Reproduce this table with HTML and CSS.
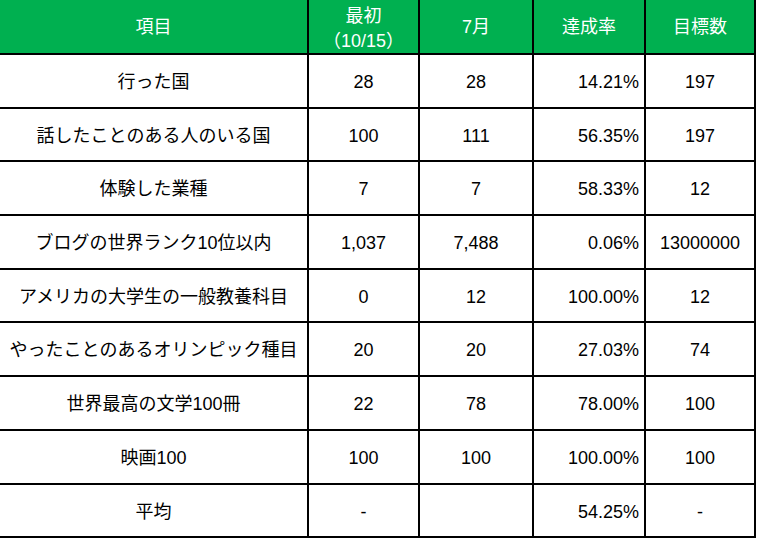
FILE: index.html
```html
<!DOCTYPE html>
<html lang="ja">
<head>
<meta charset="utf-8">
<title>目標</title>
<link rel="stylesheet" href="styles.css">
</head>
<body>
<div class="sheet">
  <div class="cell head">項目</div>
  <div class="cell head two">最初<br>（10/15）</div>
  <div class="cell head">7月</div>
  <div class="cell head">達成率</div>
  <div class="cell head">目標数</div>

  <div class="cell">行った国</div>
  <div class="cell">28</div>
  <div class="cell">28</div>
  <div class="cell right">14.21%</div>
  <div class="cell">197</div>

  <div class="cell">話したことのある人のいる国</div>
  <div class="cell">100</div>
  <div class="cell">111</div>
  <div class="cell right">56.35%</div>
  <div class="cell">197</div>

  <div class="cell">体験した業種</div>
  <div class="cell">7</div>
  <div class="cell">7</div>
  <div class="cell right">58.33%</div>
  <div class="cell">12</div>

  <div class="cell">ブログの世界ランク10位以内</div>
  <div class="cell">1,037</div>
  <div class="cell">7,488</div>
  <div class="cell right">0.06%</div>
  <div class="cell">13000000</div>

  <div class="cell">アメリカの大学生の一般教養科目</div>
  <div class="cell">0</div>
  <div class="cell">12</div>
  <div class="cell right">100.00%</div>
  <div class="cell">12</div>

  <div class="cell">やったことのあるオリンピック種目</div>
  <div class="cell">20</div>
  <div class="cell">20</div>
  <div class="cell right">27.03%</div>
  <div class="cell">74</div>

  <div class="cell">世界最高の文学100冊</div>
  <div class="cell">22</div>
  <div class="cell">78</div>
  <div class="cell right">78.00%</div>
  <div class="cell">100</div>

  <div class="cell">映画100</div>
  <div class="cell">100</div>
  <div class="cell">100</div>
  <div class="cell right">100.00%</div>
  <div class="cell">100</div>

  <div class="cell">平均</div>
  <div class="cell">-</div>
  <div class="cell"></div>
  <div class="cell right">54.25%</div>
  <div class="cell">-</div>
</div>
</body>
</html>
```

FILE: styles.css
```css
html, body {
  margin: 0;
  padding: 0;
  background: #ffffff;
}

body {
  font-family: "Liberation Sans", "Noto Sans CJK JP", sans-serif;
  font-size: 18px;
  color: #000000;
}

.sheet {
  display: grid;
  grid-template-columns: 307px 109px 112px 110px 108px;
  grid-template-rows: 53px repeat(9, 51.7px);
  gap: 2px;
  padding: 0 2px 2px 0;
  background: #000000;
  width: max-content;
}

.cell {
  background: #ffffff;
  display: flex;
  align-items: center;
  justify-content: center;
  text-align: center;
  padding-top: 4px;
  white-space: nowrap;
  line-height: 1.2;
  box-sizing: border-box;
}

.head {
  background: #00b050;
  color: #ffffff;
  padding-top: 2px;
}

.head.two {
  line-height: 25px;
  padding-top: 5px;
}

.right {
  justify-content: flex-end;
  padding-right: 5px;
}
```
